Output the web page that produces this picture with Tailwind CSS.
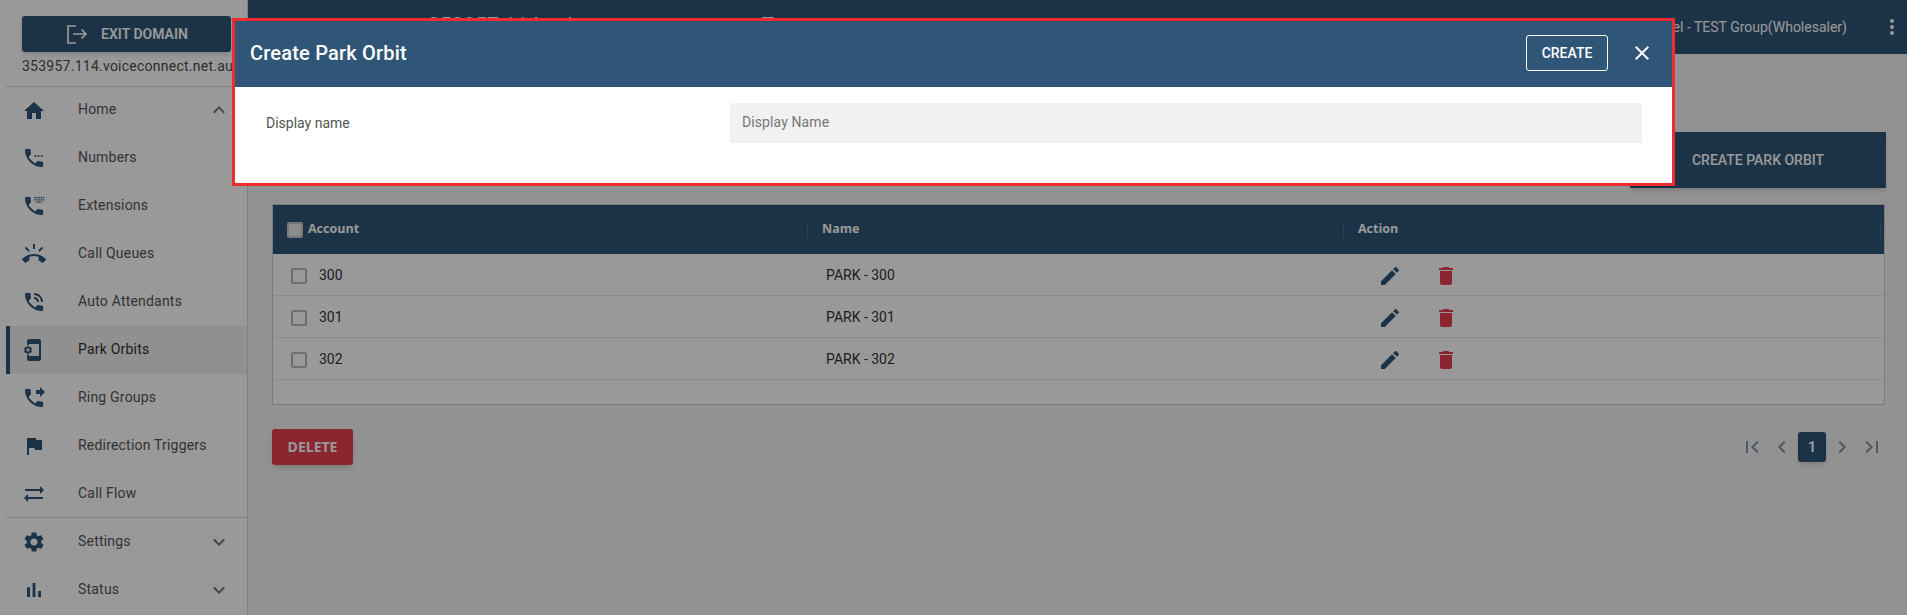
<!DOCTYPE html>
<html lang="en">
<head>
    <meta charset="UTF-8">
    <meta name="viewport" content="width=device-width, initial-scale=1.0">
    <title>Park Orbits</title>
    <script src="https://cdn.jsdelivr.net/npm/@tailwindcss/browser@4"></script>
</head>

<body class="relative h-[615px] overflow-hidden bg-[#f3f3f3] font-['Roboto',sans-serif]">

    <div class="flex h-[615px]">
        <!-- Sidebar -->
        <aside class="w-[248px] h-[615px] shrink-0 bg-white border-r border-[#d8d8d8] pl-[6px] flex flex-col">
            <div class="pl-[16px] pr-[16px] pt-[16px]">
                <button class="w-[209px] h-[36px] bg-[#2f5577] rounded-[3px] shadow-md flex items-center justify-center gap-[12px] text-white text-[14px] font-semibold">
                    <svg class="w-[24px] h-[24px]" viewBox="0 0 24 24" fill="none" stroke="currentColor" stroke-width="1.7"><path d="M11 4H3v17h8M8 12h13M16.500 7.500 21 12l-4.500 4.500"/></svg>
                    EXIT DOMAIN
                </button>
                <div class="h-[34px] pb-[5px] flex items-center whitespace-nowrap text-[14px] tracking-[0.25px] text-[#4d4d4d]">353957.114.voiceconnect.net.au</div>
            </div>
            <div class="border-t border-[#d8d8d8]"></div>

            <a class="h-[46px] mt-px flex items-center text-[14px] tracking-[0.2px] text-[#555]">
                <svg class="w-[24px] h-[24px] ml-[16px] mr-[32px] fill-[#2f5577]" viewBox="0 0 24 24"><path d="M10 20v-6h4v6h5v-8h3L12 3 2 12h3v8z"/></svg>
                <span class="flex-1 pb-[4px]">Home</span>
                <svg class="w-[24px] h-[24px] mr-[16px] mb-[2px] fill-[#777]" viewBox="0 0 24 24"><path d="M12 8l-6 6 1.410 1.410L12 10.830l4.590 4.580L18 14z"/></svg>
            </a>
            <a class="h-[48px] flex items-center text-[14px] tracking-[0.2px] text-[#555]">
                <svg class="w-[24px] h-[24px] ml-[16px] mr-[32px] fill-[#2f5577]" viewBox="0 0 24 24"><path d="M6.620 10.790c1.440 2.830 3.760 5.140 6.590 6.590l2.200-2.200c.27-.27.67-.36 1.020-.24 1.120.37 2.330.57 3.570.57.55 0 1 .45 1 1V20c0 .55-.45 1-1 1-9.390 0-17-7.610-17-17 0-.55.45-1 1-1h3.500c.55 0 1 .45 1 1 0 1.250.2 2.450.57 3.570.11.35.03.74-.25 1.020l-2.200 2.200z"/><path d="M12.500 9h1.700v1.700h-1.700zM15.700 9h1.700v1.700h-1.700zM18.900 9h1.700v1.700h-1.700z"/></svg>
                <span class="pb-[2px]">Numbers</span>
            </a>
            <a class="h-[48px] flex items-center text-[14px] tracking-[0.2px] text-[#555]">
                <svg class="w-[24px] h-[24px] ml-[16px] mr-[32px] fill-[#2f5577]" viewBox="0 0 24 24"><path d="M6.620 10.790c1.440 2.830 3.760 5.140 6.590 6.590l2.200-2.200c.27-.27.67-.36 1.020-.24 1.120.37 2.330.57 3.570.57.55 0 1 .45 1 1V20c0 .55-.45 1-1 1-9.390 0-17-7.610-17-17 0-.55.45-1 1-1h3.500c.55 0 1 .45 1 1 0 1.250.2 2.450.57 3.570.11.35.03.74-.25 1.020l-2.200 2.200z"/><path d="M12 3h1.500v1.300H12zM14.200 3h1.500v1.300h-1.500zM16.400 3h1.500v1.300h-1.500zM18.600 3h1.500v1.300h-1.500zM20.800 3h1.500v1.300h-1.500zM12 5.200h1.500v1.300H12zM14.200 5.200h1.500v1.300h-1.500zM16.400 5.200h1.500v1.300h-1.500zM18.600 5.200h1.500v1.300h-1.500zM20.800 5.200h1.500v1.300h-1.500zM14.200 7.400h1.500v1.300h-1.500zM16.400 7.400h1.500v1.300h-1.500zM18.600 7.400h1.500v1.300h-1.500z"/></svg>
                <span class="pb-[2px]">Extensions</span>
            </a>
            <a class="h-[48px] flex items-center text-[14px] tracking-[0.2px] text-[#555]">
                <svg class="w-[24px] h-[24px] ml-[16px] mr-[32px] fill-[#2f5577]" viewBox="0 0 24 24"><path d="M23.710 16.670C20.660 13.780 16.540 12 12 12 7.460 12 3.340 13.780.29 16.670c-.18.18-.29.43-.29.71 0 .28.11.53.29.71l2.480 2.480c.18.18.43.29.71.29.27 0 .52-.11.7-.28.79-.74 1.690-1.360 2.660-1.850.33-.16.56-.5.56-.9v-3.100c1.450-.48 3-.73 4.600-.73s3.150.25 4.600.72v3.100c0 .39.23.74.56.9.98.49 1.870 1.120 2.670 1.850.18.18.43.28.7.28.28 0 .53-.11.71-.29l2.480-2.480c.18-.18.29-.43.29-.71 0-.28-.11-.53-.29-.71zM21.160 6.260l-1.410-1.410-3.560 3.550 1.410 1.410s3.450-3.520 3.560-3.550zM13 2h-2v5h2V2zM6.400 9.810L7.810 8.400 4.260 4.840 2.840 6.260c.11.03 3.560 3.550 3.560 3.550z"/></svg>
                <span class="pb-[2px]">Call Queues</span>
            </a>
            <a class="h-[48px] flex items-center text-[14px] tracking-[0.2px] text-[#555]">
                <svg class="w-[24px] h-[24px] ml-[16px] mr-[32px] fill-[#2f5577]" viewBox="0 0 24 24"><path d="M6.620 10.790c1.440 2.830 3.760 5.140 6.590 6.590l2.200-2.200c.27-.27.67-.36 1.020-.24 1.120.37 2.330.57 3.570.57.55 0 1 .45 1 1V20c0 .55-.45 1-1 1-9.390 0-17-7.610-17-17 0-.55.45-1 1-1h3.500c.55 0 1 .45 1 1 0 1.250.2 2.450.57 3.570.11.35.03.74-.25 1.020l-2.200 2.200z"/><path d="M19 12h2c0-4.970-4.030-9-9-9v2c3.870 0 7 3.130 7 7zm-4 0h2c0-2.760-2.240-5-5-5v2c1.660 0 3 1.340 3 3z"/></svg>
                <span class="pb-[2px]">Auto Attendants</span>
            </a>
            <a class="h-[48px] flex items-center text-[14px] tracking-[0.2px] text-[#333] bg-[#f0f0f0] border-l-4 border-[#2f5577]">
                <svg class="w-[24px] h-[24px] ml-[12px] mr-[32px] fill-[#2f5577] -scale-x-100" viewBox="0 0 24 24"><path d="M21.810 12.740l-.82-.63v-.22l.8-.63c.16-.12.2-.34.1-.51l-.85-1.480c-.07-.13-.21-.2-.35-.2-.05 0-.1.01-.15.03l-.95.38c-.08-.05-.11-.07-.19-.11l-.15-1.010c-.03-.21-.2-.36-.4-.36h-1.710c-.2 0-.37.15-.4.34l-.14 1.010c-.03.02-.07.03-.1.05l-.09.06-.95-.38c-.05-.02-.1-.03-.15-.03-.14 0-.27.07-.35.2l-.85 1.480c-.1.17-.06.39.1.51l.8.63v.23l-.8.63c-.16.12-.2.34-.1.51l.85 1.480c.07.13.21.2.35.2.05 0 .1-.01.15-.03l.95-.37c.08.05.12.07.2.11l.15 1.010c.03.2.2.34.4.34h1.710c.2 0 .37-.15.4-.34l.15-1.010c.03-.02.07-.03.1-.05l.09-.06.95.38c.05.02.1.03.15.03.14 0 .27-.07.35-.2l.85-1.480c.1-.17.06-.39-.1-.51zM18 13.500c-.83 0-1.500-.67-1.500-1.500s.67-1.500 1.500-1.500 1.500.67 1.500 1.500-.67 1.500-1.500 1.500zM17 18H7V6h10v1h2V3c0-1.100-.9-2-2-2H7c-1.100 0-2 .9-2 2v18c0 1.100.9 2 2 2h10c1.100 0 2-.9 2-2v-4h-2v1z"/></svg>
                <span class="pb-[2px]">Park Orbits</span>
            </a>
            <a class="h-[48px] flex items-center text-[14px] tracking-[0.2px] text-[#555]">
                <svg class="w-[24px] h-[24px] ml-[16px] mr-[32px] fill-[#2f5577]" viewBox="0 0 24 24"><path d="M6.620 10.790c1.440 2.830 3.760 5.140 6.590 6.590l2.200-2.200c.27-.27.67-.36 1.020-.24 1.120.37 2.330.57 3.570.57.55 0 1 .45 1 1V20c0 .55-.45 1-1 1-9.390 0-17-7.610-17-17 0-.55.45-1 1-1h3.500c.55 0 1 .45 1 1 0 1.250.2 2.450.57 3.570.11.35.03.74-.25 1.020l-2.200 2.200z"/><path d="M18 11l5-5-5-5v3h-4v4h4v3z"/></svg>
                <span class="pb-[2px]">Ring Groups</span>
            </a>
            <a class="h-[48px] flex items-center text-[14px] tracking-[0.2px] text-[#555]">
                <svg class="w-[24px] h-[24px] ml-[16px] mr-[32px] fill-[#2f5577]" viewBox="0 0 24 24"><path d="M14.400 6L14 4H5v17h2v-7h5.600l.4 2h7V6z"/></svg>
                <span class="pb-[2px]">Redirection Triggers</span>
            </a>
            <a class="h-[48px] flex items-center text-[14px] tracking-[0.2px] text-[#555]">
                <svg class="w-[24px] h-[24px] ml-[16px] mr-[32px] fill-[#2f5577]" viewBox="0 0 24 24"><path d="M22 8l-4-4v3H3v2h15v3l4-4zM2 16l4 4v-3h15v-2H6v-3l-4 4z"/></svg>
                <span class="pb-[2px]">Call Flow</span>
            </a>
            <div class="border-t border-[#d8d8d8] -mt-px"></div>
            <a class="h-[48px] flex items-center text-[14px] tracking-[0.2px] text-[#555]">
                <svg class="w-[24px] h-[24px] ml-[16px] mr-[32px] fill-[#2f5577]" viewBox="0 0 24 24"><path d="M19.140 12.940c.04-.3.06-.61.06-.94 0-.32-.02-.64-.07-.94l2.030-1.580c.18-.14.23-.41.12-.61l-1.920-3.320c-.12-.22-.37-.29-.59-.22l-2.390.96c-.5-.38-1.030-.7-1.620-.94l-.36-2.540c-.04-.24-.24-.41-.48-.41h-3.840c-.24 0-.43.17-.47.41l-.36 2.540c-.59.24-1.130.57-1.620.94l-2.390-.96c-.22-.08-.47 0-.59.22L2.740 8.870c-.12.21-.08.47.12.61l2.030 1.580c-.05.3-.09.63-.09.94s.02.64.07.94l-2.030 1.580c-.18.14-.23.41-.12.61l1.920 3.320c.12.22.37.29.59.22l2.390-.96c.5.38 1.030.7 1.620.94l.36 2.540c.05.24.24.41.48.41h3.840c.24 0 .44-.17.47-.41l.36-2.540c.59-.24 1.130-.56 1.620-.94l2.390.96c.22.08.47 0 .59-.22l1.920-3.320c.12-.22.07-.47-.12-.61l-2.010-1.580zM12 15.600c-1.980 0-3.600-1.620-3.600-3.600s1.620-3.600 3.600-3.600 3.600 1.620 3.600 3.600-1.620 3.600-3.600 3.600z"/></svg>
                <span class="flex-1 pb-[2px]">Settings</span>
                <svg class="w-[24px] h-[24px] mr-[16px] fill-[#777]" viewBox="0 0 24 24"><path d="M16.590 8.590L12 13.170 7.410 8.590 6 10l6 6 6-6z"/></svg>
            </a>
            <a class="h-[48px] flex items-center text-[14px] tracking-[0.2px] text-[#555]">
                <svg class="w-[24px] h-[24px] ml-[16px] mr-[32px] fill-[#2f5577]" viewBox="0 0 24 24"><path d="M5 9.200h3V19H5zM10.600 5h2.800v14h-2.800zm5.600 8H19v6h-2.800z"/></svg>
                <span class="flex-1 pb-[2px]">Status</span>
                <svg class="w-[24px] h-[24px] mr-[16px] fill-[#777]" viewBox="0 0 24 24"><path d="M16.590 8.590L12 13.170 7.410 8.590 6 10l6 6 6-6z"/></svg>
            </a>
        </aside>

        <!-- Main -->
        <main class="flex-1 min-w-0">
            <header class="h-[54px] bg-[#2f5577] flex items-center pl-[180px] text-white">
                <span class="text-[21px] pb-[3px]">353957.114.voiceconnect.net.au</span>
                <span class="text-[21px] pb-[3px] ml-[28px]">Tenant</span>
                <span class="ml-auto text-[14px]">Channel - TEST Group(Wholesaler)</span>
                <svg class="w-[24px] h-[24px] ml-[33px] mr-[3px] fill-current" viewBox="0 0 24 24"><path d="M12 8c1.100 0 2-.9 2-2s-.9-2-2-2-2 .9-2 2 .9 2 2 2zm0 2c-1.100 0-2 .9-2 2s.9 2 2 2 2-.9 2-2-.9-2-2-2zm0 6c-1.100 0-2 .9-2 2s.9 2 2 2 2-.9 2-2-.9-2-2-2z"/></svg>
            </header>

            <div class="pl-[24px] pr-[22px]">
                <div class="flex justify-end pt-[78px]">
                    <button class="w-[256px] h-[56px] mr-[-1px] bg-[#2f5577] text-white text-[14px] font-medium shadow-md">CREATE PARK ORBIT</button>
                </div>

                <!-- Table -->
                <div class="mt-[16px] h-[201px] bg-white border border-[#cfcfcf]">
                    <div class="h-[49px] bg-[#2f5577] flex items-center text-white text-[12.5px] font-['Open_Sans',sans-serif] font-bold">
                        <div class="w-[534px] flex items-center pl-[14px] gap-[5px]">
                            <span class="w-[16px] h-[16px] bg-[#e8e8e8] border-2 border-[#c8c8c8] rounded-[2px]"></span>
                            Account
                        </div>
                        <div class="w-[536px] pl-[14px] border-l border-[#4a6d8c] h-[16px] flex items-center">Name</div>
                        <div class="flex-1 pl-[14px] border-l border-[#4a6d8c] h-[16px] flex items-center">Action</div>
                        <div class="w-px h-[16px] bg-[#4a6d8c] mr-[3px]"></div>
                    </div>

                    <div class="h-[42px] pt-[2px] flex items-center border-b border-[#e6e6ee] text-[14px] text-[#333]">
                        <div class="w-[534px] flex items-center pl-[18px] gap-[12px]">
                            <span class="w-[16px] h-[16px] border-2 border-[#b8b8b8] rounded-[2px]"></span>
                            300
                        </div>
                        <div class="w-[536px] pl-[19px]">PARK - 300</div>
                        <div class="flex items-center pl-[35px] gap-[32px]">
                            <svg class="w-[24px] h-[24px] fill-[#2f5577]" viewBox="0 0 24 24"><path d="M3 17.250V21h3.750L17.810 9.940l-3.750-3.750L3 17.250zM20.710 7.040c.39-.39.39-1.020 0-1.410l-2.340-2.340c-.39-.39-1.020-.39-1.410 0l-1.830 1.830 3.750 3.750 1.830-1.830z"/></svg>
                            <svg class="w-[24px] h-[24px] fill-[#e83e50]" viewBox="0 0 24 24"><path d="M6 19c0 1.100.9 2 2 2h8c1.100 0 2-.9 2-2V7H6v12zM19 4h-3.500l-1-1h-5l-1 1H5v2h14V4z"/></svg>
                        </div>
                    </div>
                    <div class="h-[42px] pt-[2px] flex items-center border-b border-[#e6e6ee] text-[14px] text-[#333]">
                        <div class="w-[534px] flex items-center pl-[18px] gap-[12px]">
                            <span class="w-[16px] h-[16px] border-2 border-[#b8b8b8] rounded-[2px]"></span>
                            301
                        </div>
                        <div class="w-[536px] pl-[19px]">PARK - 301</div>
                        <div class="flex items-center pl-[35px] gap-[32px]">
                            <svg class="w-[24px] h-[24px] fill-[#2f5577]" viewBox="0 0 24 24"><path d="M3 17.250V21h3.750L17.810 9.940l-3.750-3.750L3 17.250zM20.710 7.040c.39-.39.39-1.020 0-1.410l-2.340-2.340c-.39-.39-1.020-.39-1.410 0l-1.830 1.830 3.750 3.750 1.830-1.830z"/></svg>
                            <svg class="w-[24px] h-[24px] fill-[#e83e50]" viewBox="0 0 24 24"><path d="M6 19c0 1.100.9 2 2 2h8c1.100 0 2-.9 2-2V7H6v12zM19 4h-3.500l-1-1h-5l-1 1H5v2h14V4z"/></svg>
                        </div>
                    </div>
                    <div class="h-[42px] pt-[2px] flex items-center border-b border-[#e6e6ee] text-[14px] text-[#333]">
                        <div class="w-[534px] flex items-center pl-[18px] gap-[12px]">
                            <span class="w-[16px] h-[16px] border-2 border-[#b8b8b8] rounded-[2px]"></span>
                            302
                        </div>
                        <div class="w-[536px] pl-[19px]">PARK - 302</div>
                        <div class="flex items-center pl-[35px] gap-[32px]">
                            <svg class="w-[24px] h-[24px] fill-[#2f5577]" viewBox="0 0 24 24"><path d="M3 17.250V21h3.750L17.810 9.940l-3.750-3.750L3 17.250zM20.710 7.040c.39-.39.39-1.020 0-1.410l-2.340-2.340c-.39-.39-1.020-.39-1.410 0l-1.830 1.830 3.750 3.750 1.830-1.830z"/></svg>
                            <svg class="w-[24px] h-[24px] fill-[#e83e50]" viewBox="0 0 24 24"><path d="M6 19c0 1.100.9 2 2 2h8c1.100 0 2-.9 2-2V7H6v12zM19 4h-3.500l-1-1h-5l-1 1H5v2h14V4z"/></svg>
                        </div>
                    </div>
                </div>

                <!-- Footer -->
                <div class="mt-[24px] flex items-start justify-between">
                    <button class="w-[81px] h-[36px] pb-[2px] bg-[#e83e50] rounded-[3px] shadow-md text-white text-[14px] font-bold font-['Open_Sans',sans-serif]">DELETE</button>
                    <div class="flex items-center mt-[3px] mr-[1px]">
                        <svg class="w-[24px] h-[24px] fill-[#7f94a8] mr-[6px]" viewBox="0 0 24 24"><path d="M18.410 16.590L13.820 12l4.590-4.590L17 6l-6 6 6 6zM6 6h2v12H6z"/></svg>
                        <svg class="w-[24px] h-[24px] fill-[#7f94a8] mr-[4px]" viewBox="0 0 24 24"><path d="M15.410 7.410L14 6l-6 6 6 6 1.410-1.410L10.830 12z"/></svg>
                        <span class="w-[28px] h-[30px] bg-[#2f5577] rounded-[3px] shadow-md text-white text-[14px] font-bold flex items-center justify-center">1</span>
                        <svg class="w-[24px] h-[24px] fill-[#7f94a8] ml-[4px]" viewBox="0 0 24 24"><path d="M10 6L8.590 7.410 13.170 12l-4.580 4.590L10 18l6-6z"/></svg>
                        <svg class="w-[24px] h-[24px] fill-[#7f94a8] ml-[6px]" viewBox="0 0 24 24"><path d="M5.590 7.410L10.180 12l-4.590 4.590L7 18l6-6-6-6zM16 6h2v12h-2z"/></svg>
                    </div>
                </div>
            </div>
        </main>
    </div>

    <!-- Dialog -->
    <div class="absolute inset-0 bg-black/40"></div>
    <div class="absolute left-[232px] top-[18px] w-[1443px] h-[168px] bg-white border-[3px] border-[#ee2b30]">
        <div class="h-[66px] pb-[2px] bg-[#2f5577] flex items-center pl-[15px] text-white">
            <h2 class="text-[20px] tracking-[0.2px] font-medium flex-1">Create Park Orbit</h2>
            <button class="w-[82px] h-[36px] border border-white rounded-[3px] text-[14px] font-medium">CREATE</button>
            <svg class="w-[24px] h-[24px] ml-[22px] mr-[18px] fill-white" viewBox="0 0 24 24"><path d="M19 6.410L17.590 5 12 10.590 6.410 5 5 6.410 10.590 12 5 17.590 6.410 19 12 13.410 17.590 19 19 17.590 13.410 12z"/></svg>
        </div>
        <div class="flex items-center pt-[16px] pl-[31px]">
            <label class="w-[464px] text-[14px] text-[#555]">Display name</label>
            <div class="w-[912px] h-[40px] pb-[2px] bg-[#f1f1f1] rounded-t-[4px] pl-[12px] flex items-center text-[14px] tracking-[0.1px] text-[#777]">Display Name</div>
        </div>
    </div>

</body>
</html>
